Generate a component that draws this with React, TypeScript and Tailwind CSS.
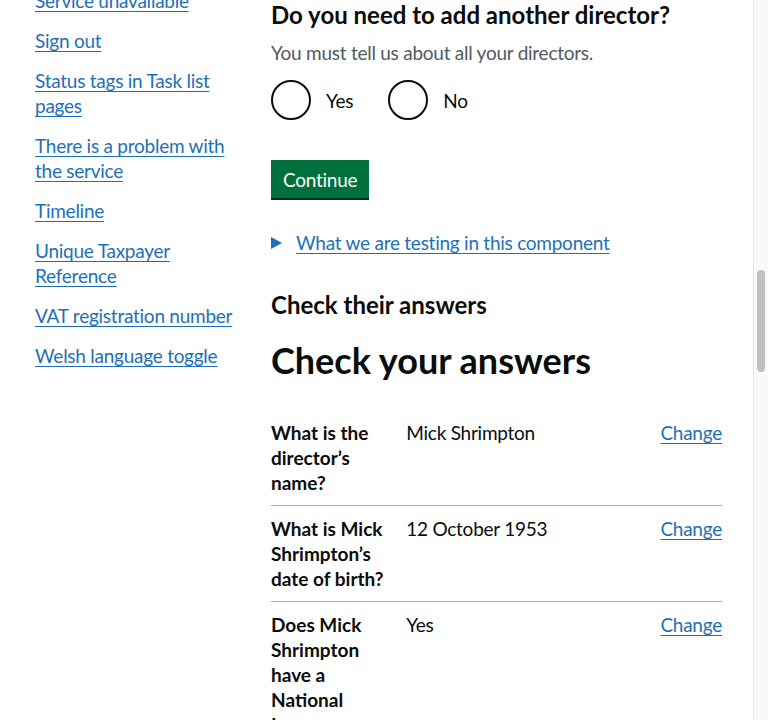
import React from 'react'

const navLinks = [
  'Service unavailable',
  'Sign out',
  'Status tags in Task list pages',
  'There is a problem with the service',
  'Timeline',
  'Unique Taxpayer Reference',
  'VAT registration number',
  'Welsh language toggle',
]

const answers = [
  { key: 'What is the director’s name?', value: 'Mick Shrimpton' },
  { key: 'What is Mick Shrimpton’s date of birth?', value: '12 October 1953' },
  { key: 'Does Mick Shrimpton have a National Insurance number?', value: 'Yes' },
]

const linkCls =
  'text-[#1d70b8] underline decoration-1 underline-offset-[3px] hover:decoration-2'

function Radio({ label }: { label: string }) {
  return (
    <label className="flex items-center mr-5">
      <span className="w-10 h-10 rounded-full border-2 border-[#0b0c0c] bg-white shrink-0" />
      <span className="px-[15px] py-[5px] text-[19px] leading-[25px]">{label}</span>
    </label>
  )
}

export default function App() {
  return (
    <div
      className="flex h-[720px] overflow-hidden bg-white text-[#0b0c0c] tracking-[-0.25px]"
      style={{ fontFamily: 'Lato, "Noto Sans", Arial, sans-serif' }}
    >
      <div className="flex flex-1 min-w-0 pl-[35px] pr-[31px]">
        {/* Side navigation */}
        <nav className="w-[212px] shrink-0 mr-[24px]">
          <ul className="-mt-[12px]">
            {navLinks.map((l) => (
              <li key={l} className="mb-[15px] text-[19px] leading-[25px]">
                <a href="#" className={linkCls}>
                  {l}
                </a>
              </li>
            ))}
          </ul>
        </nav>

        {/* Main content */}
        <main className="flex-1 min-w-0">
          <h2 className="text-[24px] leading-[30px] font-bold tracking-normal mb-[10px]">
            Do you need to add another director?
          </h2>
          <p className="text-[19px] leading-[25px] text-[#505a5f] mb-[15px]">
            You must tell us about all your directors.
          </p>
          <div className="flex mb-[40px]">
            <Radio label="Yes" />
            <Radio label="No" />
          </div>

          <button className="bg-[#00703c] text-white text-[19px] leading-[23px] px-[12px] pt-[8px] pb-[7px] shadow-[0_2px_0_#002d18] mb-[32px]">
            Continue
          </button>

          <div className="flex items-center gap-[13px] mb-[35px]">
            <svg width="12" height="12" viewBox="0 0 12 12" className="shrink-0">
              <polygon points="0,0 11,6 0,12" fill="#1d70b8" />
            </svg>
            <a href="#" className={`${linkCls} text-[19px] leading-[25px]`}>
              What we are testing in this component
            </a>
          </div>

          <h2 className="text-[24px] leading-[30px] font-bold tracking-normal mb-[20px]">
            Check their answers
          </h2>
          <h1 className="text-[36px] leading-[40px] font-bold tracking-normal mb-[30px]">
            Check your answers
          </h1>

          <dl className="text-[19px] leading-[25px]">
            {answers.map((a) => (
              <div
                key={a.key}
                className="grid grid-cols-[3fr_5fr_2fr] border-b border-[#b1b4b6] py-[10px]"
              >
                <dt className="font-bold tracking-normal pr-5">{a.key}</dt>
                <dd className="pr-5">{a.value}</dd>
                <dd className="text-right">
                  <a href="#" className={linkCls}>
                    Change
                  </a>
                </dd>
              </div>
            ))}
          </dl>
        </main>
      </div>

      {/* Scrollbar */}
      <div className="w-[15px] shrink-0 bg-[#f9f9f9] border-l border-[#e6e6e6] flex justify-center">
        <div className="mt-[270px] w-2 h-[102px] rounded-full bg-[#c1c1c1]" />
      </div>
    </div>
  )
}
